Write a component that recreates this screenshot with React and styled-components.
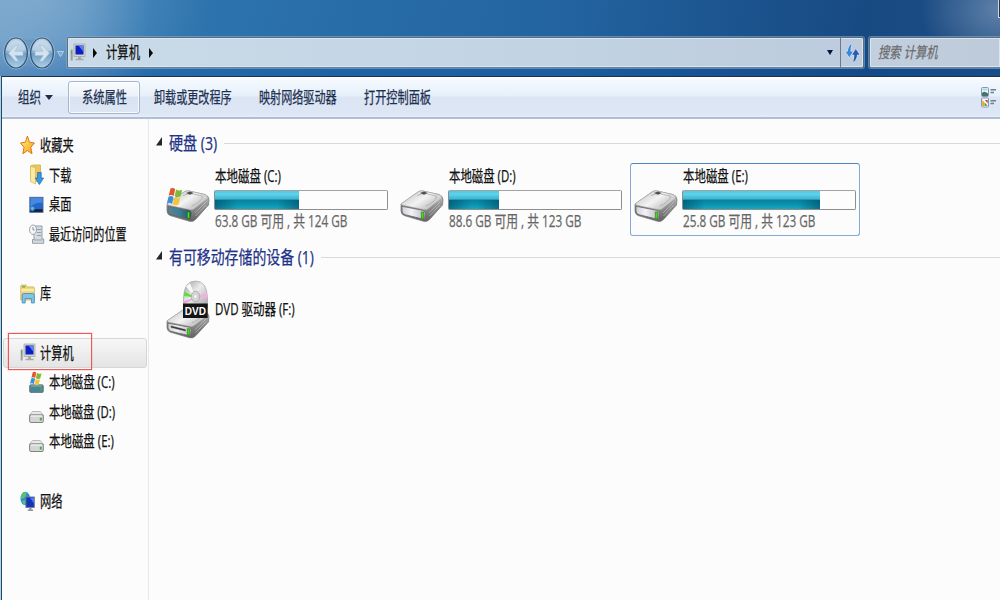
import React, { useLayoutEffect, useRef, useState } from "react";
import styled, { createGlobalStyle, css } from "styled-components";

const GlobalStyle = createGlobalStyle`
  * { box-sizing: border-box; }
  body {
    margin: 0;
    overflow: hidden;
    background: #fcfcfc;
    font-family: "Open Sans", "Noto Sans CJK SC", sans-serif;
  }
`;

/* ---------- condensed text ---------- */

const TextBox = styled.span`
  display: block;
  flex: none;
  width: ${(p) => p.$w}px;
  height: ${(p) => p.$size + 6}px;
  line-height: ${(p) => p.$size + 6}px;
  font-size: ${(p) => p.$size}px;
  color: ${(p) => p.$color};
  -webkit-text-stroke: 0.25px ${(p) => p.$color};
  white-space: nowrap;
  ${(p) => p.$italic && css`font-style: italic;`}
`;

const TextInner = styled.span`
  display: inline-block;
  transform-origin: 0 50%;
`;

function Text({ w, size = 16, color = "#111", italic, children }) {
  const ref = useRef(null);
  const [scale, setScale] = useState(0.7);
  useLayoutEffect(() => {
    if (ref.current) setScale(w / ref.current.offsetWidth);
  }, [w, children]);
  return (
    <TextBox $w={w} $size={size} $color={color} $italic={italic}>
      <TextInner ref={ref} style={{ transform: `scaleX(${scale})` }}>{children}</TextInner>
    </TextBox>
  );
}

/* ---------- window frame ---------- */

const Window = styled.div`
  width: 1000px;
  height: 600px;
  display: flex;
  flex-direction: column;
  overflow: hidden;
`;

const Glass = styled.header`
  flex: none;
  height: 76px;
  padding: 36px 0 0 3px;
  display: flex;
  align-items: flex-start;
  position: relative;
  background:
    radial-gradient(ellipse 80px 60px at 1000px 10px, rgba(140, 165, 195, 0.6), rgba(150, 175, 205, 0) 100%),
    radial-gradient(ellipse 170px 110px at 40px 0, rgba(165, 195, 220, 0.4), rgba(140, 175, 205, 0) 100%),
    linear-gradient(180deg, rgba(10, 70, 150, 0) 50%, rgba(10, 75, 155, 0.3) 100%),
    linear-gradient(96deg, #6c9dc7 0, #5690c0 80px, #2f76b0 150px, #286da8 340px, #2364a0 560px, #1c5590 720px, #184a82 860px, #1d4c82 1000px);
`;

const CaptionEdge = styled.div`
  position: absolute;
  right: 0;
  top: 0;
  width: 2px;
  height: 18px;
  border-left: 1px solid #c9d7e6;
  border-bottom: 1px solid #c9d7e6;
  background: #26384f;
`;

const NavButtons = styled.div`
  width: 64px;
  height: 34px;
`;

const barFrame = css`
  height: 31px;
  margin-top: 1px;
  display: flex;
  align-items: center;
  border: 1px solid #5f6d7c;
  border-bottom-color: #6b8298;
  border-radius: 2px;
  box-shadow: inset 0 0 0 1px #d9e4ee, 0 0 0 1px rgba(130, 170, 205, 0.6);
`;

const AddressBar = styled.div`
  ${barFrame}
  width: 797px;
  padding-left: 2px;
  background: linear-gradient(90deg, #c9dae8, #c4d6e5 45%, #bccbdd);
`;

const Crumb = styled.div`
  display: flex;
  align-items: center;
  flex: 1;
  padding-bottom: 2px;
`;

const CrumbArrow = styled.i`
  border: 5px solid transparent;
  border-left: 4.5px solid #0a0a0a;
  border-right: 0;
  margin: 2px ${(p) => p.$after || 0}px 0 ${(p) => p.$before}px;
`;

const DownArrow = styled.i`
  border: ${(p) => p.$half || 3.5}px solid transparent;
  border-top: ${(p) => (p.$half || 3.5) + 1.5}px solid ${(p) => p.$color || "#10103a"};
  border-bottom: 0;
`;

const DropZone = styled.div`
  width: 16px;
  display: flex;
  justify-content: center;
  margin-right: 2px;
`;

const Refresh = styled.div`
  width: 23px;
  height: 100%;
  border-left: 1px solid #6b7b8d;
  display: flex;
  align-items: center;
  justify-content: center;
`;

const Search = styled.div`
  ${barFrame}
  flex: 1;
  margin-left: 5px;
  padding-left: 8px;
  border-right: 0;
  border-radius: 2px 0 0 2px;
  background: linear-gradient(90deg, #c2cfdf, #bccada);
`;

const Client = styled.div`
  flex: 1;
  display: flex;
  flex-direction: column;
  border-left: 1px solid #a9d3ec;
  min-height: 0;
`;

const ClientInner = styled.div`
  flex: 1;
  display: flex;
  flex-direction: column;
  border-left: 1px solid #264a66;
  border-top: 1px solid #1f3347;
  min-height: 0;
`;

/* ---------- command bar ---------- */

const CommandBar = styled.div`
  flex: none;
  height: 42px;
  padding: 4px 0 0 16px;
  display: flex;
  align-items: flex-start;
  border-bottom: 2px solid #b0bfd4;
  background: linear-gradient(180deg, #fdfeff 0, #f3f8fd 4px, #e6f0fa 19px, #dbe5f4 20px, #dce6f4 36px, #e6edf8 40px);
`;

const Command = styled.div`
  height: 33px;
  display: flex;
  align-items: center;
  gap: 4px;
  margin-left: ${(p) => p.$gap || 0}px;
  ${(p) =>
    p.$active &&
    css`
      width: 72px;
      padding-left: 13px;
      border: 1px solid #a5b6cf;
      border-radius: 3px;
      box-shadow: inset 0 0 0 1px rgba(255, 255, 255, 0.75);
      background: linear-gradient(180deg, #fafcfe 0, #eaf1f9 45%, #d8e3f1 50%, #dde7f4 100%);
    `}
`;

const ViewSwitch = styled.div`
  margin: 5px 3px 0 auto;
  height: 24px;
`;

/* ---------- panes ---------- */

const Panes = styled.div`
  flex: 1;
  display: flex;
  min-height: 0;
  background: #fcfcfc;
`;

const Sidebar = styled.nav`
  width: 147px;
  flex: none;
  padding: 12px 1px 0 1px;
  border-right: 1px solid #dfeaf5;
`;

const SideRow = styled.div`
  height: 29.65px;
  display: flex;
  align-items: center;
  gap: 4px;
  padding-left: ${(p) => (p.$child ? 26 : 17)}px;
  margin-bottom: ${(p) => (p.$last ? 29.65 : 0)}px;
  position: relative;
  ${(p) =>
    p.$selected &&
    css`
      border: 1px solid #d6d6d6;
      padding-left: 16px;
      border-radius: 3px;
      background: linear-gradient(180deg, #f7f7f7, #e4e4e4);
    `}
`;

const IconSlot = styled.span`
  flex: none;
  width: 16px;
  height: 22px;
`;

const RedMarker = styled.div`
  position: absolute;
  left: 4px;
  top: -6px;
  width: 84px;
  height: 37px;
  border-width: 1px;
  border-style: solid;
  border-color: rgb(240, 88, 88);
  box-shadow: 0 0 0 0.5px rgba(240, 110, 110, 0.4);
`;

const Content = styled.main`
  flex: 1;
  min-width: 0;
  padding-left: 7px;
`;

const GroupHeader = styled.div`
  height: 30px;
  display: flex;
  align-items: center;
  margin-top: ${(p) => p.$top}px;
`;

const Rule = styled.div`
  flex: 1;
  height: 1px;
  margin: 0 0 0 7px;
  background: #d9d9d9;
`;

const Expander = styled.span`
  width: 6px;
  height: 9px;
  margin: 0 7px 3px 0;
  display: flex;
`;

const Tiles = styled.div`
  display: flex;
  gap: 3.5px;
  padding: 5px 0 0 5.5px;
`;

const Tile = styled.div`
  width: 230.5px;
  height: 73px;
  padding-left: 3px;
  display: flex;
  gap: 5px;
  border: 1px solid ${(p) => (p.$focus ? "#83a9d6" : "transparent")};
  border-top-color: ${(p) => (p.$focus ? "#4c84c4" : "transparent")};
  border-radius: 3px;
`;

const TileIcon = styled.div`
  width: 44px;
  height: 40px;
  margin-top: 22px;
`;

const TileInfo = styled.div`
  padding-top: 2px;
`;

const Meter = styled.div`
  width: 174px;
  height: 20px;
  margin: 2px 0 1px -1px;
  border: 1px solid #8e8e8e;
  border-top-color: #a3a3a3;
  border-radius: 2px;
  background: #fdfdfd;
`;

const MeterFill = styled.div`
  height: 100%;
  background:
    linear-gradient(90deg, rgba(0, 60, 85, 0.5), rgba(0, 60, 85, 0) 22px, rgba(0, 60, 85, 0) calc(100% - 22px), rgba(0, 60, 85, 0.5)) 0 9px no-repeat,
    linear-gradient(180deg, #55c4de 0, #5fd3ec 3px, #3fb4d0 8px, #08829d 9px, #0a94b0 14px, #18a7c0 18px);
`;

const DvdTile = styled.div`
  display: flex;
  align-items: center;
  height: 62px;
  padding-left: 10px;
  margin-top: 7px;
  gap: 5px;
`;

/* ---------- icons ---------- */

const Svg = styled.svg`
  display: block;
  overflow: visible;
`;

function BackForward() {
  const disc = (cx) => (
    <g>
      <ellipse cx={cx} cy="17" rx="12.5" ry="16" fill="#5985ad" stroke="#9bbfdc" strokeWidth="1" />
      <ellipse cx={cx} cy="17" rx="11.3" ry="15" fill="url(#orb)" stroke="#365675" strokeWidth="1.2" />
      <path d={`M${cx - 10} 14 A10.3 13.3 0 0 1 ${cx + 10} 14 Q${cx} 18 ${cx - 10} 14Z`} fill="#e8f2fa" opacity=".4" />
    </g>
  );
  return (
    <Svg width="64" height="34" viewBox="0 0 64 34">
      <defs>
        <linearGradient id="orb" x1="0" y1="0" x2="0" y2="1">
          <stop offset="0" stopColor="#b9d0e3" />
          <stop offset=".48" stopColor="#8cb0d0" />
          <stop offset=".52" stopColor="#6f9cc2" />
          <stop offset="1" stopColor="#acd0e9" />
        </linearGradient>
      </defs>
      <path d="M13 1 Q26 7 39 1 V33 Q26 27 13 33Z" fill="#6796c0" opacity=".7" />
      {disc(13)}
      {disc(39)}
      <path d="M5.5 17.3 L12.5 9.5 H15.5 L11.8 15.3 H20 V19.5 H11.8 L15.5 25.3 H12.5Z" fill="#d3e2ee" stroke="#a4bfd5" strokeWidth=".6" />
      <path d="M46.5 17.3 L39.5 9.5 H36.5 L40.2 15.3 H32 V19.5 H40.2 L36.5 25.3 H39.5Z" fill="#d3e2ee" stroke="#a4bfd5" strokeWidth=".6" />
      <path d="M54.5 15.5 H60.5 L57.5 20.5Z" fill="#78a6cc" stroke="#c7dcec" strokeWidth=".8" />
    </Svg>
  );
}

function ComputerIcon() {
  return (
    <Svg width="16" height="20" viewBox="0 0 16 20">
      <rect x="4" y="2" width="11" height="12.5" fill="#d6d6d0" stroke="#a3a39c" strokeWidth=".7" />
      <rect x="5.5" y="3.5" width="8" height="9" fill="#0a1fc4" />
      <path d="M8.5 3.5H13.5V10Z" fill="#5c80f0" />
      <path d="M8 14.5h3v2.3h2.5V18.3h-8v-1.5H8Z" fill="#a8a8a8" />
      <path d="M.7 7.5h2v11H.7Z" fill="#9a9ea4" />
      <rect x="1" y="9" width="1" height="3" fill="#49b34c" />
    </Svg>
  );
}

function RefreshIcon() {
  return (
    <Svg width="15" height="20" viewBox="0 0 15 20">
      <g stroke="#edf4fb" strokeWidth="1" paintOrder="stroke">
        <path d="M6.8 1 Q2.9 3 2.9 8.5H.5L4.3 14.2 8.1 8.5H5.6Q5.4 4.5 6.8 1Z" fill="#3a86d8" />
        <path d="M8 19 Q12 16.5 12 11.7H14.6L10.8 6 7 11.7H9.3Q9.6 15.5 8 19Z" fill="#2658b4" />
      </g>
    </Svg>
  );
}

function ViewIcon() {
  return (
    <Svg width="17" height="23" viewBox="0 0 17 23">
      <rect x="1.5" y="1.5" width="7" height="9" rx="1" fill="#f5f9fc" stroke="#8599ae" />
      <path d="M2 7 Q4.5 4.5 8 7.5V10H2Z" fill="#3f7868" />
      <rect x="2.2" y="2.2" width="5.5" height="2.5" fill="#b9dcf2" />
      <rect x="1.5" y="12" width="7" height="9" rx="1" fill="#f5f9fc" stroke="#8599ae" />
      <path d="M2.3 13.7 L4.7 17V20H2.3Z" fill="#e4a51e" />
      <path d="M5 14H7.7V17.5Z" fill="#c73c31" />
      <path d="M4.9 16.8 7.6 19.7H4.9Z" fill="#42903f" />
      <path d="M10.5 3.7H16M10.5 6.5H14M10.5 14.7H16M10.5 17.5H14" stroke="#6d7e91" strokeWidth="1.4" />
    </Svg>
  );
}

function StarIcon() {
  return (
    <Svg width="16" height="22" viewBox="0 0 16 22">
      <defs>
        <linearGradient id="star" x1="0" y1="0" x2="1" y2="1">
          <stop offset="0" stopColor="#fff2a0" />
          <stop offset=".5" stopColor="#fcc944" />
          <stop offset="1" stopColor="#f09a28" />
        </linearGradient>
      </defs>
      <path d="M7.4 1 9.4 7.2 14.4 8 10.8 12.3 12 18.7 7.4 15.5 2.8 18.7 4 12.3.5 8 5.4 7.2Z" fill="url(#star)" stroke="#dd761f" strokeWidth="1" strokeLinejoin="round" />
    </Svg>
  );
}

function DownloadIcon() {
  return (
    <Svg width="16" height="22" viewBox="0 0 16 22">
      <path d="M1.5 2 L4 1 H11.5V17.5H2.5Z" fill="#e9c75c" stroke="#c9a747" strokeWidth=".7" />
      <path d="M1.5 2 6.5 4V20L1.5 17.5Z" fill="#fbe9a1" stroke="#d2b45a" strokeWidth=".7" />
      <path d="M8.6 8.5H12.2V14H14.6L10.4 20.5 6.3 14H8.6Z" fill="#3998e2" stroke="#1765ad" strokeWidth=".7" />
    </Svg>
  );
}

function DesktopIcon() {
  return (
    <Svg width="16" height="22" viewBox="0 0 16 22">
      <rect x=".8" y="3.3" width="13.2" height="15" fill="#2367cc" stroke="#4a6893" strokeWidth=".9" />
      <path d="M1.5 4H13.5V9Q7 8 1.5 13Z" fill="#4988de" />
      <path d="M1.3 15.3H13.6V17.8H1.3Z" fill="#161d29" />
      <circle cx="3.5" cy="14.8" r="2.2" fill="#3ba1e8" />
      <path d="M2.7 13.5H3.7V15H2.7Z" fill="#f3c444" />
    </Svg>
  );
}

function RecentIcon() {
  return (
    <Svg width="16" height="22" viewBox="0 0 16 22">
      <path d="M5 2H13V15H14.7V19.3H3.5V15.5H5Z" fill="#d9dcdf" stroke="#8f969c" strokeWidth=".9" />
      <path d="M7.5 5.5H12M8 8.5H12M8 11.5H12M5 16H13.3" stroke="#83a5bb" strokeWidth="1" />
      <ellipse cx="4" cy="5.7" rx="3.5" ry="4.7" fill="#f6f8fa" stroke="#98a2ab" strokeWidth="1" />
      <path d="M4 3V6H5.7" stroke="#66798b" strokeWidth=".8" fill="none" />
    </Svg>
  );
}

function LibraryIcon() {
  return (
    <Svg width="16" height="22" viewBox="0 0 16 22">
      <path d="M.8 3 Q.8 2 1.8 2H6L7 4H13.3Q14.3 4 14.3 5V17H.8Z" fill="#f3d97a" stroke="#cfae4c" strokeWidth=".8" />
      <path d="M1.2 7H14" stroke="#fcf1b9" strokeWidth="1.5" />
      <rect x="2.2" y="3" width="3" height="1.6" fill="#63b158" />
      <path d="M2.2 20V12Q2.2 10.5 3.7 10.5H12.7Q14.3 10.5 14.3 12V20H11.4V15.5H5.2V20Z" fill="#7ec3ea" stroke="#3a8cc0" strokeWidth=".8" />
    </Svg>
  );
}

function Flag() {
  return (
    <g>
      <path d="M3 1.5 Q5 .2 7.7 2L6.2 9Q3.8 7.3 1.2 8.7Z" fill="#e2562b" />
      <path d="M8.6 2.5Q11.3 4.3 14.7 2.8L13 9.6Q9.8 11 7.1 9.3Z" fill="#7fb93c" />
      <path d="M1 9.7Q3.7 8.3 6 10L4.5 17Q2 15 -.7 16.5Z" fill="#3a8edb" />
      <path d="M6.8 10.4Q9.6 12 12.7 10.7L11 17.6Q8 19 5.4 17.3Z" fill="#f6c434" />
    </g>
  );
}

function SmallDrive({ system }) {
  return (
    <Svg width="16" height="22" viewBox="0 0 16 22">
      {!system && <path d="M3.5 9.5H11.3L14.2 13V14H.7V13Z" fill="#e8e8e8" stroke="#ababab" strokeWidth=".8" />}
      <rect x=".6" y="12.8" width="13.7" height="7.7" rx="1.3" fill={system ? "#47859a" : "#d5d5d5"} stroke="#777" strokeWidth=".9" />
      <path d="M2 14H13" stroke={system ? "#81b4c3" : "#fafafa"} strokeWidth="1" />
      <rect x="10.8" y="15.7" width="2" height="2.8" fill="#3cb23c" />
      {system && <g transform="translate(1.5 -1) scale(.75 .78)"><Flag /></g>}
    </Svg>
  );
}

function NetworkIcon() {
  return (
    <Svg width="16" height="22" viewBox="0 0 16 22">
      <ellipse cx="5.3" cy="7.5" rx="4.8" ry="6.7" fill="#2b8bdc" />
      <path d="M1 4.5Q4-.5 7 1.3L5.5 6 1.8 8Q0 6.5 1 4.5ZM2 10 5.5 9V14Q2.5 13.2 2 10Z" fill="#5ac46b" />
      <rect x="5.9" y="6" width="8.4" height="10.4" fill="#1235bb" stroke="#6e7b91" strokeWidth=".9" />
      <path d="M10 6.7H14V12.5Z" fill="#4e7cee" />
      <path d="M9.3 16.8H11.5V18.5H13V20H7.8V18.5H9.3Z" fill="#8c95a0" />
    </Svg>
  );
}

function DriveBody({ system, slot }) {
  const face = system ? "url(#faceSys)" : "url(#face)";
  return (
    <g>
      <defs>
        <linearGradient id="lid" x1="0" y1="0" x2="1" y2=".7">
          <stop offset="0" stopColor="#bcbcbc" />
          <stop offset=".55" stopColor="#f3f3f3" />
          <stop offset="1" stopColor="#b4b4b4" />
        </linearGradient>
        <linearGradient id="side" x1="0" y1="0" x2="0" y2="1">
          <stop offset="0" stopColor="#d8d8d8" />
          <stop offset=".4" stopColor="#9a9a9a" />
          <stop offset="1" stopColor="#616161" />
        </linearGradient>
        <linearGradient id="face" x1="0" y1="0" x2="1" y2="0">
          <stop offset="0" stopColor="#d0d0d4" />
          <stop offset=".4" stopColor="#f2f2f8" />
          <stop offset="1" stopColor="#b9b9c0" />
        </linearGradient>
        <linearGradient id="faceSys" x1="0" y1="0" x2="1" y2="0">
          <stop offset="0" stopColor="#5c8190" />
          <stop offset=".5" stopColor="#3a7f93" />
          <stop offset="1" stopColor="#245061" />
        </linearGradient>
      </defs>
      <path d="M1 18 18 6Q20 4.5 23 5L39 8.5Q43 10 43 13.5L42.5 19 30 33Q27 36.5 23.5 35.3L4 29.5Q1 28 1 25Z" fill="url(#side)" stroke="#757575" strokeWidth=".7" />
      <path d="M1.5 17.5 18 6Q20 4.5 23 5L39.5 8.8Q42.5 10.5 41.5 12.5L28 23Q26.5 24.2 24 23.7L3 19.3Q1 18.7 1.5 17.5Z" fill="url(#lid)" stroke="#a0a0a0" strokeWidth=".5" />
      <path d="M17 9.5 24 7.2 37 10.3Q34 17 25.5 20" fill="none" stroke="#ababab" strokeWidth=".8" />
      <path d="M20 7 24 5.5 27.5 7 24 8.7Z" fill="#4f4f4f" />
      <path d="M2 20.3 23 24.3Q25.5 25 25.3 27.2L24.6 33.5 5 28.7Q2 27.7 2 25Z" fill={face} stroke="#666" strokeWidth=".8" />
      {slot && <path d="M4.5 22.5 20 26.5V29L4.5 25Z" fill="#3b3b3b" stroke="#fafafa" strokeWidth=".5" />}
      <path d="M21.3 26H23.7V32.6L21.3 32Z" fill="#38e712" stroke="#32671e" strokeWidth=".6" />
      <path d="M29 27 40 16M29.5 30 40 19" stroke="#d7d7d7" strokeWidth=".7" opacity=".7" />
    </g>
  );
}

function DriveIcon({ system }) {
  return (
    <Svg width="44" height="40" viewBox="0 0 44 40">
      <DriveBody system={system} />
      {system && <g transform="translate(1.5 1)"><Flag /></g>}
    </Svg>
  );
}

function DvdIcon() {
  return (
    <Svg width="44" height="62" viewBox="0 0 44 62">
      <defs>
        <linearGradient id="disc" x1="0" y1="0" x2="1" y2="1">
          <stop offset="0" stopColor="#9c9c9c" />
          <stop offset=".45" stopColor="#ececec" />
          <stop offset="1" stopColor="#a3a3a3" />
        </linearGradient>
      </defs>
      <g transform="translate(0 24.5) scale(1 .97)"><DriveBody slot /></g>
      <path d="M17.5 29V19Q18 2 29.5 2T41.5 19V29Z" fill="url(#disc)" stroke="#a6a6a6" strokeWidth=".7" />
      <path d="M29.5 18.5 18.3 12.5 18 17Z" fill="#5fdd3d" />
      <path d="M29.5 18.5 20 7.5 24 4Z" fill="#f9f9f9" />
      <path d="M29.5 18.5 41 13 41.5 19Z" fill="#efb1dd" />
      <path d="M29.5 18.5 18 22V25.5Z" fill="#e9a6d4" />
      <ellipse cx="29.5" cy="17.5" rx="4.2" ry="5.3" fill="#d6d6d6" stroke="#9b9b9b" strokeWidth=".7" />
      <ellipse cx="29.5" cy="17.5" rx="1.6" ry="2.2" fill="#fff" stroke="#aaa" strokeWidth=".5" />
      <rect x="17" y="24.5" width="24.7" height="14.5" fill="#151515" />
      <text x="29.4" y="35.5" textAnchor="middle" fontFamily="Liberation Sans, sans-serif" fontWeight="700" fontSize="10" fill="#fff">DVD</text>
    </Svg>
  );
}

/* ---------- data ---------- */

const sideItems = [
  { label: "收藏夹", w: 34, icon: <StarIcon /> },
  { label: "下载", w: 22.5, icon: <DownloadIcon />, child: true },
  { label: "桌面", w: 22.5, icon: <DesktopIcon />, child: true },
  { label: "最近访问的位置", w: 78, icon: <RecentIcon />, child: true, last: true },
  { label: "库", w: 11.5, icon: <LibraryIcon />, last: true },
  { label: "计算机", w: 34, icon: <ComputerIcon />, selected: true },
  { label: "本地磁盘 (C:)", w: 65.5, icon: <SmallDrive system />, child: true },
  { label: "本地磁盘 (D:)", w: 66.5, icon: <SmallDrive />, child: true },
  { label: "本地磁盘 (E:)", w: 65, icon: <SmallDrive />, child: true, last: true },
  { label: "网络", w: 22.5, icon: <NetworkIcon /> },
];

const drives = [
  { name: "本地磁盘 (C:)", w: 66, info: "63.8 GB 可用 , 共 124 GB", used: 84, system: true },
  { name: "本地磁盘 (D:)", w: 67, info: "88.6 GB 可用 , 共 123 GB", used: 50 },
  { name: "本地磁盘 (E:)", w: 65, info: "25.8 GB 可用 , 共 123 GB", used: 137, focus: true },
];

const commandColor = "#1e3050";

function Group({ title, w, top }) {
  return (
    <GroupHeader $top={top}>
      <Expander>
        <svg width="6" height="9" viewBox="0 0 6 9"><path d="M6 0V8.5H0Z" fill="#262626" /></svg>
      </Expander>
      <Text w={w} size={18.5} color="#1e3287">{title}</Text>
      <Rule />
    </GroupHeader>
  );
}

export default function App() {
  return (
    <Window>
      <GlobalStyle />
      <Glass>
        <CaptionEdge />
        <NavButtons><BackForward /></NavButtons>
        <AddressBar>
          <Crumb>
            <ComputerIcon />
            <CrumbArrow $before={7} $after={9} />
            <Text w={34}>计算机</Text>
            <CrumbArrow $before={9} />
          </Crumb>
          <DropZone><DownArrow /></DropZone>
          <Refresh><RefreshIcon /></Refresh>
        </AddressBar>
        <Search><Text w={60} size={15.5} color="#6c6c6c" italic>搜索 计算机</Text></Search>
      </Glass>
      <Client>
        <ClientInner>
          <CommandBar>
            <Command>
              <Text w={23} color={commandColor} size={15.5}>组织</Text>
              <DownArrow $color="#1c2e4c" $half={4} />
            </Command>
            <Command $active $gap={14.5}><Text w={45} color={commandColor} size={15.5}>系统属性</Text></Command>
            <Command $gap={14}><Text w={78} color={commandColor} size={15.5}>卸载或更改程序</Text></Command>
            <Command $gap={27}><Text w={78} color={commandColor} size={15.5}>映射网络驱动器</Text></Command>
            <Command $gap={27}><Text w={67} color={commandColor} size={15.5}>打开控制面板</Text></Command>
            <ViewSwitch><ViewIcon /></ViewSwitch>
          </CommandBar>
          <Panes>
            <Sidebar>
              {sideItems.map((it) => (
                <SideRow key={it.label} $child={it.child} $last={it.last} $selected={it.selected}>
                  <IconSlot>{it.icon}</IconSlot>
                  <Text w={it.w} size={15.5}>{it.label}</Text>
                  {it.selected && <RedMarker />}
                </SideRow>
              ))}
            </Sidebar>
            <Content>
              <Group title="硬盘 (3)" w={48} top={9} />
              <Tiles>
                {drives.map((d) => (
                  <Tile key={d.name} $focus={d.focus}>
                    <TileIcon><DriveIcon system={d.system} /></TileIcon>
                    <TileInfo>
                      <Text w={d.w} size={15.5}>{d.name}</Text>
                      <Meter><MeterFill style={{ width: d.used }} /></Meter>
                      <Text w={132} size={15.5} color="#666">{d.info}</Text>
                    </TileInfo>
                  </Tile>
                ))}
              </Tiles>
              <Group title="有可移动存储的设备 (1)" w={145} top={6} />
              <DvdTile>
                <DvdIcon />
                <Text w={80} size={15.5}>DVD 驱动器 (F:)</Text>
              </DvdTile>
            </Content>
          </Panes>
        </ClientInner>
      </Client>
    </Window>
  );
}
